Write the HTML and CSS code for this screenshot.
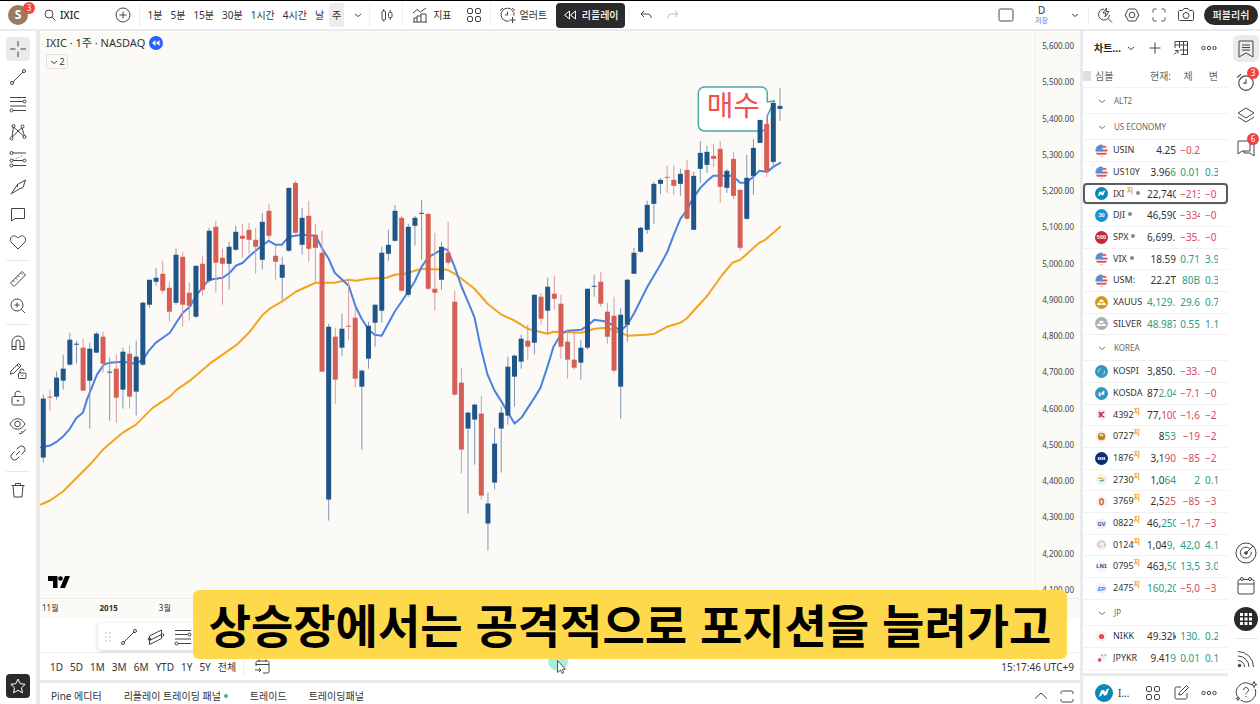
FILE: index.html
```html
<!DOCTYPE html>
<html lang="ko">
<head>
<meta charset="utf-8">
<title>IXIC · 1주 · NASDAQ</title>
<link rel="stylesheet" href="styles.css">
</head>
<body>
<svg class="defs" aria-hidden="true">
  <symbol id="flag" viewBox="0 0 14 14"><clipPath id="fc"><circle cx="7" cy="7" r="6.5"/></clipPath><g clip-path="url(#fc)"><path fill="#fff" d="M0 0h14v14H0z"/><path fill="#e0535a" d="M7 2h7v2H7zM7 6h7v2.200H7zM0 9.500h14v2H0zM2 12.800h10V14H2z"/><path fill="#3b82d8" d="M0 0h8v8H0z"/><path stroke="#b9d6f7" stroke-width=".7" stroke-dasharray="1 1" d="M1 2.500h7M1 4.500h7M1 6.500h7"/></g></symbol>
  <symbol id="nasdaq" viewBox="0 0 14 14"><circle cx="7" cy="7" r="7" fill="#0a87b5"/><path fill="#fff" d="M3 9.900 4.600 5.300l2-.8 1.500 1.800.8-2.100 2.100-.8-1.700 4.900-2 .8-1.500-1.900-.8 1.900z"/></symbol>
  <symbol id="chev" viewBox="0 0 10 10"><path d="M2 4l3 2.500L8 4" fill="none" stroke="currentColor"/></symbol>
  <symbol id="trend" viewBox="0 0 18 18"><path d="M4 14 14 4"/><circle cx="3" cy="15" r="1.500"/><circle cx="15" cy="3" r="1.500"/></symbol>
  <symbol id="fib" viewBox="0 0 18 18"><path d="M1 2.500h16M1 6.500h13M1 11h16M4 15.500h13"/><circle cx="15.500" cy="6.500" r="1.500"/><circle cx="2.500" cy="15.500" r="1.500"/></symbol>
  <symbol id="four" viewBox="0 0 16 16"><rect x="1.500" y="1.500" width="5" height="5" rx="1.500"/><rect x="9.500" y="1.500" width="5" height="5" rx="1.500"/><rect x="1.500" y="9.500" width="5" height="5" rx="1.500"/><rect x="9.500" y="9.500" width="5" height="5" rx="1.500"/></symbol>
  <symbol id="dots" viewBox="0 0 16 16"><circle cx="2.500" cy="8" r="1.700"/><circle cx="8" cy="8" r="1.700"/><circle cx="13.500" cy="8" r="1.700"/></symbol>
  <symbol id="alarm" viewBox="0 0 18 18"><circle cx="9" cy="10" r="6.500"/><path d="M9 6.500V10H6.500M1 5l3.500-3M17 5l-3.500-3"/></symbol>
</svg>

<header class="top">
  <button class="avatar" aria-label="계정">S<span class="badge">3</span></button>
  <button class="symbol"><svg class="ic s12" viewBox="0 0 12 12"><circle cx="5" cy="5" r="4"/><path d="M8 8l3.500 3.500"/></svg>IXIC</button>
  <button class="add" aria-label="비교"><svg class="ic s16" viewBox="0 0 16 16"><circle cx="8" cy="8" r="7"/><path d="M8 4.500v7M4.500 8h7"/></svg></button>
  <nav class="periods">
    <button>1분</button><button>5분</button><button>15분</button><button>30분</button><button>1시간</button><button>4시간</button><button>날</button><button class="on">주</button>
    <button aria-label="더보기"><svg class="ic s10"><use href="#chev"/></svg></button>
  </nav>
  <button class="cell" aria-label="차트 타입"><svg class="ic s14" viewBox="0 0 14 14"><rect x="2" y="3" width="3.500" height="9" rx="1"/><path d="M3.700 1v2M3.700 12v1.500M10.200 2v2.500M10.200 9.500V12"/><rect x="8.500" y="4.500" width="3.500" height="5" rx="1"/></svg></button>
  <div class="cell pair">
    <button><svg class="ic s16" viewBox="0 0 16 16"><path d="M1 6l4-3.500 3.500 2.500L14 1M2 15v-4h3v4M5 11V9h4v6M9 9V7h5v8M1 15h14"/></svg>지표</button>
    <button aria-label="템플릿"><svg class="ic s16"><use href="#four"/></svg></button>
  </div>
  <button class="cell alert"><svg class="ic s18" viewBox="0 0 18 18"><path d="M15 9.500A6.500 6.500 0 1 0 10 15M8.500 5.500V9H6M1 4.500 4 2M16 4.500 13 2M13.500 11v6M10.500 14h6"/></svg>얼러트</button>
  <button class="replay"><svg class="ic s14" viewBox="0 0 14 14"><path d="M6.500 3v8L1.500 7zM12.500 3v8L7.500 7z"/></svg>리플레이</button>
  <div class="undo">
    <button aria-label="되돌리기"><svg class="ic s14" viewBox="0 0 14 14"><path d="M5 3 2 6l3 3M2 6h6.500a3.500 3.500 0 0 1 3.500 4"/></svg></button>
    <button class="dim" aria-label="다시하기"><svg class="ic s14" viewBox="0 0 14 14"><path d="M9 3l3 3-3 3M12 6H5.500A3.500 3.500 0 0 0 2 10"/></svg></button>
  </div>
  <div class="right">
    <button aria-label="레이아웃"><svg class="ic s16" viewBox="0 0 16 16"><rect x="1" y="2" width="14" height="12" rx="1.500"/></svg></button>
    <button class="save">D<small>저장</small></button>
    <button aria-label="레이아웃 메뉴"><svg class="ic s10"><use href="#chev"/></svg></button>
    <div class="acts">
      <button aria-label="빠른 검색"><svg class="ic s16" viewBox="0 0 16 16"><path d="M7 2a5.500 5.500 0 1 0 5.500 6M11 11.500l4 4M9.500 1 6 6h3l-1 4 4-5.500H9z"/></svg></button>
      <button aria-label="설정"><svg class="ic s16" viewBox="0 0 16 16"><path d="M4.500 2h7L15 8l-3.500 6h-7L1 8z"/><circle cx="8" cy="8" r="2.800"/></svg></button>
      <button aria-label="전체화면"><svg class="ic s16" viewBox="0 0 16 16"><path d="M2 5.500v-2A1.500 1.500 0 0 1 3.500 2h2M10.500 2h2A1.500 1.500 0 0 1 14 3.500v2M14 10.500v2a1.500 1.500 0 0 1-1.500 1.500h-2M5.500 14h-2A1.500 1.500 0 0 1 2 12.500v-2"/></svg></button>
      <button aria-label="스냅샷"><svg class="ic s16" viewBox="0 0 16 16"><path d="M1.500 3.500h3l1.500-2h4l1.500 2h3A1 1 0 0 1 15.500 4.500v8a1 1 0 0 1-1 1h-13a1 1 0 0 1-1-1v-8a1 1 0 0 1 1-1z"/><circle cx="8" cy="8.500" r="3"/></svg></button>
    </div>
    <button class="publish">퍼블리쉬</button>
  </div>
</header>

<main class="work">
  <aside class="tools">
    <div class="grp g8">
      <button class="on" aria-label="십자선"><svg class="ic s18" viewBox="0 0 18 18"><path d="M9 1v5.500M9 11.500V17M1 9h5.500M11.500 9H17"/></svg></button>
      <button aria-label="추세선"><svg class="ic s18"><use href="#trend"/></svg></button>
      <button aria-label="피보나치"><svg class="ic s18"><use href="#fib"/></svg></button>
      <button aria-label="패턴"><svg class="ic s18" viewBox="0 0 18 18"><path d="M3 14 4.500 4 9 8l4-3 2.500 8M3.500 14 9 8l5.500 5"/><circle cx="2.500" cy="15.500" r="1.500"/><circle cx="4.500" cy="3" r="1.500"/><circle cx="13.500" cy="3.500" r="1.500"/><circle cx="15.500" cy="14" r="1.500"/></svg></button>
      <button aria-label="예측"><svg class="ic s18" viewBox="0 0 18 18"><path d="M4 3h13M4 10.500h10M4 15.500h13"/><path stroke-dasharray="1 2" d="M4 10 15 5"/><circle cx="2.500" cy="3" r="1.500"/><circle cx="2.500" cy="10.500" r="1.500"/><circle cx="15.500" cy="10.500" r="1.500"/><circle cx="2.500" cy="15.500" r="1.500"/></svg></button>
      <button aria-label="브러쉬"><svg class="ic s18" viewBox="0 0 18 18"><path d="M2 16 8.500 6.500 16.500 2 14 9.500l-4 1.500zM8.500 6.500v2.500"/></svg></button>
      <button aria-label="텍스트"><svg class="ic s18" viewBox="0 0 18 18"><path d="M2.500 3.500h13v10H6L2.500 16z"/></svg></button>
      <button aria-label="아이콘"><svg class="ic s18" viewBox="0 0 18 18"><path d="M9 16 2 9C-.5 5 4.500 0 9 5c4.500-5 9.500 0 7 4z"/></svg></button>
    </div>
    <hr>
    <div class="grp g2">
      <button aria-label="측정"><svg class="ic s18" viewBox="0 0 18 18"><path d="M1.500 13 13 1.500 16.500 5 5 16.500zM4 10.500l1.500 1.500M6.500 8 8 9.500M9 5.500 10.500 7M11.500 3 13 4.500"/></svg></button>
      <button aria-label="줌 인"><svg class="ic s18" viewBox="0 0 18 18"><circle cx="8" cy="8" r="6"/><path d="M12.500 12.500 16 16M8 5.500v5M5.500 8h5"/></svg></button>
    </div>
    <hr>
    <div class="grp g5">
      <button aria-label="자석"><svg class="ic s18" viewBox="0 0 18 18"><path d="M3 15.500V8a6 6 0 0 1 12 0v7.500h-4V8a2 2 0 0 0-4 0v7.500zM3 12.500h4M11 12.500h4"/></svg></button>
      <button aria-label="드로잉 모드"><svg class="ic s18" viewBox="0 0 18 18"><path d="M1.500 12 2 9l7.500-7.500 2.500 2.500L4.500 11.500zM8 3l2.500 2.500"/><rect x="9.500" y="11" width="7.500" height="5.500" rx="1"/><path d="M11 11V9a2 2 0 0 1 4 0M13.200 13v1.500"/></svg></button>
      <button aria-label="잠금"><svg class="ic s18" viewBox="0 0 18 18"><rect x="3" y="7.500" width="12" height="8.500" rx="1.500"/><path d="M6 7.500V5a3 3 0 0 1 5.500-1.500"/><circle cx="9" cy="11.700" r=".7"/></svg></button>
      <button aria-label="감추기"><svg class="ic s18" viewBox="0 0 18 18"><path d="M1 7c4-7 11-7 15 0-4 7-11 7-15 0z"/><circle cx="8.500" cy="7" r="2.800"/><path d="M10 16c1 1 3 1 4-1l3-2.500M12 14.500l2 1"/></svg></button>
      <button aria-label="동기화"><svg class="ic s18" viewBox="0 0 18 18"><path d="M7.500 5.500 10 3a3.500 3.500 0 0 1 5 5l-2.500 2.500M10.500 12.500 8 15a3.500 3.500 0 0 1-5-5l2.500-2.500M7 11l4-4"/></svg></button>
    </div>
    <hr>
    <button aria-label="지우기"><svg class="ic s18" viewBox="0 0 18 18"><path d="M2.500 4.500h13M4 4.500 5 16h8l1-11.500M6.500 4.500v-2h5v2"/></svg></button>
    <button class="star" aria-label="즐겨찾기"><svg class="ic s18" viewBox="0 0 18 18"><path d="M9 2l2.200 4.700 5 .6-3.700 3.500 1 5L9 13.300 4.500 15.800l1-5L1.800 7.300l5-.6z"/></svg></button>
  </aside>

  <section class="center">
    <div class="chart">
      <div class="plot">
        <svg id="candles" viewBox="40 31 996 567" preserveAspectRatio="xMinYMin meet"></svg>
        <div class="legend">
          <h1>IXIC · 1주 · NASDAQ<svg class="s14" viewBox="0 0 14 14"><circle cx="7" cy="7" r="7" fill="#2962ff"/><path fill="#fff" d="M6.500 4v6L3 7zM10.500 4v6L7 7z"/></svg></h1>
          <button><svg class="ic s10"><use href="#chev"/></svg>2</button>
        </div>
        <svg class="tv" viewBox="0 0 22 12"><path d="M0 0h9.500v12H5V5H0z"/><circle cx="12.500" cy="2.500" r="2.300"/><path d="M17 0h5l-5 12h-5z"/></svg>
      </div>
      <ol class="prices">
        <li>5,600.00</li><li>5,500.00</li><li>5,400.00</li><li>5,300.00</li><li>5,200.00</li><li>5,100.00</li><li>5,000.00</li><li>4,900.00</li><li>4,800.00</li><li>4,700.00</li><li>4,600.00</li><li>4,500.00</li><li>4,400.00</li><li>4,300.00</li><li>4,200.00</li><li>4,100.00</li>
      </ol>
    </div>
    <div class="times"><span>11월</span><b>2015</b><span>3월</span></div>
    <div class="drawbar">
      <div class="float">
        <svg class="grip" viewBox="0 0 6 10"><path d="M0 1h1.500M4 1h1.500M0 5h1.500M4 5h1.500M0 9h1.500M4 9h1.500"/></svg>
        <button aria-label="추세선"><svg class="ic s18"><use href="#trend"/></svg></button>
        <button aria-label="채널"><svg class="ic s18" viewBox="0 0 18 18"><path d="M2.500 8 14.500 2v4.500l-12 6zM2.500 16.500l12-6V7M2.500 12.500v4"/><circle cx="2.500" cy="11" r="1.300"/><circle cx="15.500" cy="7" r="1.300"/></svg></button>
        <button aria-label="피보나치"><svg class="ic s18"><use href="#fib"/></svg></button>
      </div>
    </div>
    <div class="ranges">
      <button>1D</button><button>5D</button><button>1M</button><button>3M</button><button>6M</button><button>YTD</button><button>1Y</button><button>5Y</button><button>전체</button>
      <button class="goto" aria-label="날짜로 가기"><svg class="ic s16" viewBox="0 0 16 16"><path d="M2 7V3.500A1.500 1.500 0 0 1 3.500 2h10A1.500 1.500 0 0 1 15 3.500v9a1.500 1.500 0 0 1-1.500 1.500H9M2 5.500h13M5 .5V3M12 .5V3M1 11h6M5 9l2 2-2 2"/></svg></button>
      <time>15:17:46 UTC+9</time>
    </div>
    <div class="tabs">
      <button>Pine 에디터</button><button>리플레이 트레이딩 패널<i></i></button><button>트레이드</button><button>트레이딩패널</button>
      <button class="open" aria-label="열기"><svg class="ic s14" viewBox="0 0 14 14"><path d="M1 9.500 7 4l6 5.500"/></svg></button>
      <button aria-label="최대화"><svg class="ic s14" viewBox="0 0 14 14"><path d="M1 5V3.500A1.500 1.500 0 0 1 2.500 2h9A1.500 1.500 0 0 1 13 3.500V5M1 10v1.500A1.500 1.500 0 0 0 2.500 13h9a1.500 1.500 0 0 0 1.500-1.500V10"/></svg></button>
    </div>
  </section>

  <section class="watch">
    <div class="whead">
      <button class="wname">차트… <svg class="ic s10"><use href="#chev"/></svg></button>
      <button aria-label="추가"><svg class="ic s14" viewBox="0 0 14 14"><path d="M7 1.500v11M1.500 7h11"/></svg></button>
      <button aria-label="테이블 뷰"><svg class="ic s16" viewBox="0 0 16 16"><path d="M2 8V1.500h12.500v13H8M2 5h12.500M6.500 1.500V8M10.500 1.500v13M6.500 10H14.500M1 14.500 5 10.500M2 10.500h3v3"/></svg></button>
      <button aria-label="메뉴"><svg class="ic s16"><use href="#dots"/></svg></button>
    </div>
    <table>
      <colgroup><col class="c1"><col class="c2"><col class="c3"><col class="c4"><col class="c5"><col></colgroup>
      <thead><tr><th colspan="2" class="sy">심볼</th><th>현재:</th><th>체</th><th class="pc">변</th><th></th></tr></thead>
      <tbody><tr class="sec"><th colspan="6"><svg class="ic s10"><use href="#chev"/></svg>ALT2</th></tr></tbody>
      <tbody><tr class="sec"><th colspan="6"><svg class="ic s10"><use href="#chev"/></svg>US ECONOMY</th></tr></tbody>
      <tbody>
        <tr><td><svg class="lg"><use href="#flag"/></svg></td><td>USIN</td><td>4.25</td><td class="dn">−0.2</td><td></td><td></td></tr>
        <tr><td><svg class="lg"><use href="#flag"/></svg></td><td>US10Y</td><td>3.96<em>6</em></td><td class="up">0.01</td><td class="up">0.3</td><td></td></tr>
        <tr class="sel"><td><svg class="lg"><use href="#nasdaq"/></svg></td><td>IXI <sup>지</sup><i></i></td><td class="cut">22,740</td><td class="dn cut">−213</td><td class="dn">−0</td><td></td></tr>
        <tr><td><svg class="lg" viewBox="0 0 14 14"><circle cx="7" cy="7" r="7" fill="#1e93d0"/><text x="7" y="9">30</text></svg></td><td>DJI<i></i></td><td class="cut">46,590</td><td class="dn cut">−334</td><td class="dn">−0</td><td></td></tr>
        <tr><td><svg class="lg" viewBox="0 0 14 14"><circle cx="7" cy="7" r="7" fill="#c42841"/><text x="7" y="9">500</text></svg></td><td>SPX<i></i></td><td class="cut">6,699.</td><td class="dn">−35.</td><td class="dn">−0</td><td></td></tr>
        <tr><td><svg class="lg"><use href="#flag"/></svg></td><td>VIX<i></i></td><td>18.59</td><td class="up">0.71</td><td class="up">3.9</td><td></td></tr>
        <tr><td><svg class="lg"><use href="#flag"/></svg></td><td>USM:</td><td>22.2T</td><td class="up">80B</td><td class="up">0.3</td><td></td></tr>
        <tr><td><svg class="lg" viewBox="0 0 14 14"><circle cx="7" cy="7" r="7" fill="#d39b13"/><path fill="#fff" d="M5.500 4h3l1 2.500h-5zM3 7.200h3.200l.8 2.600H2zM7.800 7.200H11l1 2.600H7z"/></svg></td><td>XAUUS</td><td class="up cut">4,129.</td><td class="up">29.6</td><td class="up">0.7</td><td></td></tr>
        <tr><td><svg class="lg" viewBox="0 0 14 14"><circle cx="7" cy="7" r="7" fill="#adafb5"/><path fill="#fff" d="M5.500 4h3l1 2.500h-5zM3 7.200h3.200l.8 2.600H2zM7.800 7.200H11l1 2.600H7z"/></svg></td><td>SILVER</td><td class="up cut">48.987</td><td class="up">0.55</td><td class="up">1.1</td><td></td></tr>
      </tbody>
      <tbody><tr class="sec"><th colspan="6"><svg class="ic s10"><use href="#chev"/></svg>KOREA</th></tr></tbody>
      <tbody>
        <tr><td><svg class="lg" viewBox="0 0 14 14"><circle cx="7" cy="7" r="7" fill="#3498bd"/><path fill="none" stroke="#bfe6f4" d="M4 8a3 3 0 0 1 2-4M10 6a3 3 0 0 1-2 4"/></svg></td><td>KOSPI</td><td class="cut">3,850.</td><td class="dn">−33.</td><td class="dn">−0</td><td></td></tr>
        <tr><td><svg class="lg" viewBox="0 0 14 14"><circle cx="7" cy="7" r="7" fill="#3498bd"/><path fill="#fff" d="M4 6h2v4H4zM7 6l3-2.500V8L7 9z"/></svg></td><td>KOSDA</td><td class="cut">87<em>2.04</em></td><td class="dn">−7.1</td><td class="dn">−0</td><td></td></tr>
        <tr><td><svg class="lg" viewBox="0 0 14 14"><circle cx="7" cy="7" r="6" fill="#f6eef0"/><path fill="none" stroke="#cf3355" stroke-width="1.500" d="M4 4.500c3 0 3 5 0 5M10 4.500c-4 0-4 5 0 5M4 7h4"/></svg></td><td>4392<sup>지</sup></td><td class="cut">77,<s>100</s></td><td class="dn">−1,6</td><td class="dn">−2</td><td></td></tr>
        <tr><td><svg class="lg" viewBox="0 0 14 14"><circle cx="7" cy="7" r="6" fill="#f4f0e8"/><circle cx="7" cy="7" r="4" fill="#b98434"/><path fill="#f0d9a0" d="M4 6c2-3 5-2 5 0-1 2-3 0-5 0z"/></svg></td><td>0727<sup>지</sup></td><td>8<em>53</em></td><td class="dn">−19</td><td class="dn">−2</td><td></td></tr>
        <tr><td><svg class="lg" viewBox="0 0 14 14"><circle cx="7" cy="7" r="7" fill="#0c2d70"/><path fill="#dfe8f8" d="M3 5.500h8v3H3z"/><path stroke="#0c2d70" stroke-width=".6" d="M5 5.500v3M7 5.500v3M9 5.500v3"/></svg></td><td>1876<sup>지</sup></td><td>3,1<s>90</s></td><td class="dn">−85</td><td class="dn">−2</td><td></td></tr>
        <tr><td><svg class="lg" viewBox="0 0 14 14"><circle cx="7" cy="7" r="6" fill="#f2f4f2"/><path fill="#e0ad3c" d="M3 6c2-2 5-1 7 1z"/><path fill="#51a86c" d="M4 8c3 2 5 1 7-1z"/></svg></td><td>2730<sup>지</sup></td><td>1,0<em>64</em></td><td class="up">2</td><td class="up">0.1</td><td></td></tr>
        <tr><td><svg class="lg" viewBox="0 0 14 14"><circle cx="7" cy="7" r="6" fill="#f7f0ee"/><ellipse cx="7" cy="7.300" rx="2" ry="3" fill="none" stroke="#d7592f" stroke-width="1.400"/></svg></td><td>3769<sup>지</sup></td><td>2,5<s>25</s></td><td class="dn">−85</td><td class="dn">−3</td><td></td></tr>
        <tr><td><svg class="lg" viewBox="0 0 14 14"><circle cx="7" cy="7" r="6" fill="#eef2f7"/><text class="nv" x="7" y="9.500">GV</text></svg></td><td>0822<sup>지</sup></td><td class="cut">46,<em>250</em></td><td class="dn">−1,7</td><td class="dn">−3</td><td></td></tr>
        <tr><td><svg class="lg" viewBox="0 0 14 14"><circle cx="7" cy="7" r="6" fill="#f4efec"/><path fill="none" stroke="#d3a58f" d="M5 10a3.500 3.500 0 1 1 4 0M5 10l2-2"/></svg></td><td>0124<sup>지</sup></td><td class="cut">1,04<em>9,</em></td><td class="up">42,0</td><td class="up">4.1</td><td></td></tr>
        <tr><td><svg class="lg" viewBox="0 0 14 14"><circle cx="7" cy="7" r="6" fill="#f1f3f8"/><text class="nv" x="7" y="9">LN1</text></svg></td><td>0795<sup>지</sup></td><td class="cut">463,<em>50</em></td><td class="up">13,5</td><td class="up">3.0</td><td></td></tr>
        <tr><td><svg class="lg" viewBox="0 0 14 14"><circle cx="7" cy="7" r="6" fill="#eaf3fb"/><text class="bl" x="7" y="9.500">EP</text></svg></td><td>2475<sup>지</sup></td><td class="up cut">160,20</td><td class="dn">−5,0</td><td class="dn">−3</td><td></td></tr>
      </tbody>
      <tbody><tr class="sec"><th colspan="6"><svg class="ic s10"><use href="#chev"/></svg>JP</th></tr></tbody>
      <tbody>
        <tr><td><svg class="lg" viewBox="0 0 14 14"><circle cx="7" cy="7" r="6" fill="#f5f3f4"/><circle cx="7" cy="7" r="2.800" fill="#e84b5c"/></svg></td><td>NIKK</td><td class="cut">49.32k</td><td class="up">130.</td><td class="up">0.2</td><td></td></tr>
        <tr><td><svg class="lg" viewBox="0 0 14 14"><circle cx="9" cy="5" r="4" fill="#f1f2f5"/><circle cx="5" cy="8.500" r="2" fill="#e84b5c"/><path stroke="#555" d="M7 3l1.500 1.500M10.500 2.500 12 4"/></svg></td><td>JPYKR</td><td>9.41<em>9</em></td><td class="up">0.01</td><td class="up">0.1</td><td></td></tr>
      </tbody>
    </table>
    <div class="wfoot">
      <svg class="s18" viewBox="0 0 14 14"><use href="#nasdaq"/></svg><span>I…</span>
      <button aria-label="그리드"><svg class="ic s16"><use href="#four"/></svg></button>
      <button aria-label="노트"><svg class="ic s16" viewBox="0 0 16 16"><path d="M8 2H3.500A1.500 1.500 0 0 0 2 3.500v9A1.500 1.500 0 0 0 3.500 14h9a1.500 1.500 0 0 0 1.500-1.500V8M6 10l.5-2.500 7-7 2 2-7 7z"/></svg></button>
      <button aria-label="더보기"><svg class="ic s16"><use href="#dots"/></svg></button>
    </div>
  </section>

  <aside class="rail">
    <button class="on" aria-label="워치리스트"><svg class="ic s20" viewBox="0 0 20 20"><path d="M3 2h14v16l-7-4-7 4zM6 6h8M6 8.500h8M6 11h8"/></svg></button>
    <button aria-label="얼러트"><svg class="ic s20"><use href="#alarm"/></svg><span class="badge">3</span></button>
    <button aria-label="오브젝트 트리"><svg class="ic s20" viewBox="0 0 20 20"><path d="M10 3l8 5-8 5-8-5zM2 12l8 5 8-5"/></svg></button>
    <button aria-label="채팅"><svg class="ic s20" viewBox="0 0 20 20"><path d="M2 3h12v10H6l-4 3zM14 6h4v12l-4-3H8v-2"/></svg><span class="badge">6</span></button>
    <div class="low">
      <button aria-label="스크리너"><svg class="ic s22" viewBox="0 0 22 22"><circle cx="11" cy="11" r="10"/><path d="M14.500 6.500A5.500 5.500 0 1 0 16.300 10M11 11l7-7"/><circle cx="11" cy="11" r="1.300" fill="currentColor"/></svg></button>
      <button aria-label="캘린더"><svg class="ic s20" viewBox="0 0 20 20"><rect x="2" y="3.500" width="16" height="14.500" rx="2"/><path d="M2 8h16"/><circle cx="6" cy="3" r="1.500" fill="#fff"/><circle cx="14" cy="3" r="1.500" fill="#fff"/></svg></button>
      <button aria-label="프로덕트"><svg class="s24" viewBox="0 0 24 24"><circle cx="12" cy="12" r="12" fill="#2a2a2a"/><path fill="#fff" d="M6 6h3v3H6zM10.500 6h3v3h-3zM15 6h3v3h-3zM6 10.500h3v3H6zM10.500 10.500h3v3h-3zM15 10.500h3v3h-3zM6 15h3v3H6zM10.500 15h3v3h-3zM15 15h3v3h-3z"/></svg></button>
      <hr>
      <button aria-label="피드"><svg class="ic s20" viewBox="0 0 20 20"><path d="M2 2.500A15.500 15.500 0 0 1 17.500 18M2 7a11 11 0 0 1 11 11M2 11.500A6.500 6.500 0 0 1 8.500 18"/><circle cx="3.500" cy="16.500" r="1.300" fill="currentColor"/></svg></button>
      <button aria-label="도움말"><svg class="ic s22" viewBox="0 0 22 22"><path d="M16 3.500A9.500 9.500 0 0 0 2 15M5.500 19A9.500 9.500 0 0 0 20 8"/><path d="M8.500 9a2.500 2.500 0 1 1 3.500 2.300c-.7.400-1 .8-1 2M11 15v1.200"/><path d="M19 .5l.8 2.200 2 .8-2 .8L19 6.500l-.8-2.200-2-.8 2-.8zM3 15.500l.5 1.500 1.500.5-1.500.5L3 19.500 2.500 18 1 17.500 2.500 17z"/></svg></button>
    </div>
  </aside>
</main>

<svg class="pointer" viewBox="0 0 20 24" aria-hidden="true"><circle cx="10" cy="10" r="10" fill="#a9ebdf"/><path d="M9.500 9.500v12l3-2.500 1.500 3.500 1.800-.8-1.500-3.400h3.200z" fill="#fff" stroke="#555"/></svg>
<p class="caption">상승장에서는 공격적으로 포지션을 늘려가고</p>
<script src="chart.js"></script>
</body>
</html>
```
FILE: styles.css
```css
* { box-sizing: border-box; }
body {
  margin: 0; height: 100vh; overflow: hidden; position: relative;
  display: flex; flex-direction: column;
  border-top: 1px solid #000; background: #fff; color: #333;
  font: 10px/14px "Noto Sans", "Noto Sans CJK KR", sans-serif;
}
button {
  appearance: none; border: 0; background: none; padding: 0; margin: 0;
  color: inherit; font: inherit; cursor: pointer;
  display: flex; align-items: center; justify-content: center; white-space: nowrap; flex: none;
}
svg { display: block; flex: none; }
hr { border: 0; border-top: 1px solid #e8e8ea; margin: 0; width: 24px; }
.defs { position: absolute; width: 0; height: 0; }
.ic { fill: none; stroke: currentColor; stroke-width: 1; color: #444; }
.s10 { width: 10px; height: 10px; }
.s12 { width: 12px; height: 12px; }
.s14 { width: 14px; height: 14px; }
.s16 { width: 16px; height: 16px; }
.s18 { width: 18px; height: 18px; }
.s20 { width: 20px; height: 20px; }
.s22 { width: 22px; height: 22px; }
.s24 { width: 24px; height: 24px; }
.badge {
  position: absolute; top: -3px; right: -7px; width: 12px; height: 12px; border-radius: 6px;
  background: #ef4444; color: #fff; font-size: 8px; line-height: 12px; font-weight: 400; text-align: center;
}

.top { display: flex; align-items: center; height: 30px; flex: none; border-bottom: 2px solid #ebebed; padding-left: 8px; }
.avatar { position: relative; width: 20px; height: 20px; border-radius: 10px; background: #9b7b60; color: #fff; font-size: 12px; font-weight: 700; }
.symbol { margin-left: 16px; gap: 4px; font-weight: 500; color: #222; }
.add { margin-left: 35px; }
.periods { display: flex; align-items: center; gap: 8px; margin-left: 8px; padding-left: 8px; border-left: 1px solid #eee; height: 24px; }
.periods .on { background: #ececee; border-radius: 3px; height: 24px; width: 15px; margin: 0 -3px; }
.periods .on + button { margin-left: 4px; }
.cell { height: 24px; margin-left: 6px; padding-left: 10px; border-left: 1px solid #eee; gap: 5px; }
.periods + .cell { margin-left: 6px; }
.pair { display: flex; gap: 14px; margin-left: 8px; padding-left: 9px; }
.pair button { gap: 5px; }
.alert { margin-left: 8px; padding-left: 8px; gap: 3px; }
.replay { margin-left: 9px; height: 25px; width: 69px; gap: 5px; border-radius: 4px; background: #2a2a2a; color: #fff; font-weight: 500; }
.replay .ic { color: #fff; }
.undo { display: flex; gap: 13px; margin-left: 4px; padding-left: 9px; border-left: 1px solid #eee; }
.dim .ic { color: #b8b8b8; }
.right { margin-left: auto; display: flex; align-items: center; padding-right: 2px; }
.save { flex-direction: column; font-size: 10px; line-height: 11px; margin: 0 22px 0 21px; }
.save small { font-size: 7px; line-height: 9px; color: #4f78e8; }
.acts { display: flex; gap: 11px; margin: 0 10px 0 8px; padding-left: 8px; border-left: 1px solid #eee; }
.publish { width: 54px; height: 20px; border-radius: 10px; background: #2a2a2a; color: #fff; font-weight: 500; }

.work { flex: 1; min-height: 0; display: flex; background: #ebebed; }
.tools { width: 36px; background: #fff; padding: 6px 0; display: flex; flex-direction: column; align-items: center; gap: 6px; flex: none; }
.tools button { width: 24px; height: 24px; border-radius: 4px; }
.tools .on { background: #ebebed; }
.grp { display: flex; flex-direction: column; justify-content: space-between; }
.g8 { height: 217px; }
.g2 { height: 51px; }
.g5 { height: 134px; }
.tools .star { margin-top: auto; background: #2a2a2a; }
.star .ic { color: #fff; }

.center { flex: 1; min-width: 0; margin-left: 4px; display: flex; flex-direction: column; background: #fff; }
.chart { flex: 1; min-height: 0; display: flex; background: #fbfaf6; }
.plot { flex: 1; min-width: 0; display: grid; grid-template: minmax(0, 1fr) / minmax(0, 1fr); border-right: 1px solid #eeede9; }
.plot > * { grid-area: 1 / 1; }
#candles { width: 100%; height: 100%; }
.wu { stroke: #8494b4; }
.wd { stroke: #dc9a9d; }
.bu { fill: #1f5689; }
.bd { fill: #d65f55; }
.ma { fill: none; stroke-width: 2; stroke-linejoin: round; stroke-linecap: round; }
.fast { stroke: #4a80e4; }
.slow { stroke: #f7a21e; }
.bubble { fill: #fff; stroke: #4aa9ab; stroke-width: 1.5; }
.buy { font-size: 29px; font-family: "Noto Sans CJK KR", sans-serif; fill: #ee5250; text-anchor: middle; font-weight: 400; }
.legend { align-self: start; justify-self: start; padding: 4px 6px; }
.legend h1 { display: flex; align-items: center; gap: 4px; margin: 0 0 3px; font-size: 11px; line-height: 16px; font-weight: 400; }
.legend button { width: 22px; height: 15px; border: 1px solid #e3e2de; border-radius: 2px; font-size: 9px; }
.tv { align-self: end; width: 22px; height: 12px; margin: 0 0 10px 8px; fill: #000; }
.prices { list-style: none; margin: 0; width: 44px; padding: 9px 6px 2px 0; display: flex; flex-direction: column; justify-content: space-between; text-align: right; font-size: 8px; line-height: 12px; color: #444; }
.times { display: flex; gap: 41px; padding-left: 2px; height: 20px; line-height: 17px; border-top: 1px solid #eeede9; background: #fbfaf6; font-size: 8px; flex: none; }
.drawbar { height: 35px; padding: 5px 0 0 58px; border-bottom: 1px solid #eee; flex: none; }
.float { display: flex; align-items: center; gap: 9px; width: 200px; height: 27px; padding-left: 7px; border-radius: 4px; box-shadow: 0 1px 4px #0003; }
.grip { width: 6px; height: 10px; stroke: #aaa; fill: none; }
.ranges, .tabs { display: flex; align-items: center; flex: none; }
.ranges { height: 27px; gap: 7px; padding: 0 6px 0 10px; }
.goto { border-left: 1px solid #eee; padding-left: 10px; }
.ranges time { margin-left: auto; }
.tabs { height: 24px; border-top: 3px solid #ebebed; padding: 4px 6px 0 11px; gap: 22px; }
.tabs i { width: 4px; height: 4px; border-radius: 2px; background: #5aa977; margin-left: 3px; }
.tabs .open { margin: 0 -10px 0 auto; }

.watch { width: 145px; margin-left: 3px; background: #fff; display: flex; flex-direction: column; flex: none; }
.whead { display: flex; align-items: center; height: 34px; padding: 0 11px; justify-content: space-between; flex: none; }
.wname { font-weight: 700; gap: 5px; color: #222; }
table { border-collapse: collapse; table-layout: fixed; width: 100%; }
.c1 { width: 30px; } .c2 { width: 32px; } .c3 { width: 31px; } .c4 { width: 24px; } .c5 { width: 18px; }
th { font-weight: 400; text-align: center; padding: 0; color: #666; }
thead th { height: 22px; overflow: hidden; white-space: nowrap; }
thead .sy { text-align: left; padding-left: 12px; background: linear-gradient(#dededf, #dededf) 0 6px / 8px 10px no-repeat; }
thead .pc { text-align: right; }
tr { border-bottom: 1px solid #f1f1f3; }
td { height: 22px; padding: 0; line-height: 14px; text-align: right; white-space: nowrap; overflow: hidden; }
tr:nth-child(3n) td { height: 21px; }
td:nth-child(2) { text-align: left; font-size: 9px; }
td:nth-child(5) { text-align: left; padding-left: 5px; }
td.cut { text-align: left; padding-left: 2px; }
td.cut:nth-child(4) { padding-left: 4px; }
.lg { width: 13px; height: 13px; margin-left: 12px; }
.lg text { font: 700 6px "Liberation Sans", sans-serif; fill: #fff; text-anchor: middle; }
.lg .nv { fill: #27457f; }
.lg .bl { fill: #2c7fd0; font-style: italic; }
.up, td em { color: #2a9d82; font-style: normal; }
.dn, td s { color: #d9485f; text-decoration: none; }
td sup { font-size: 7px; line-height: 7px; font-weight: 700; color: #f0a020; vertical-align: 4px; }
td i { display: inline-block; width: 4px; height: 4px; border-radius: 2px; background: #8a8a8a; margin: 0 0 2px 3px; }
.sec th { height: 26px; text-align: left; font-size: 8px; padding-top: 2px; }
.sec svg { display: inline-block; vertical-align: -2px; margin: 0 7px 0 14px; color: #777; }
.sel { position: relative; }
.sel::after { content: ""; position: absolute; inset: 0 0 -1px; border: 2px solid #5c5c5c; border-radius: 4px; }
.wfoot { margin-top: auto; height: 31px; border-top: 3px solid #ebebed; display: flex; align-items: center; padding: 6px 11px 0 12px; gap: 12px; flex: none; }
.wfoot span { margin: 0 4px 0 -7px; }

.rail { width: 28px; margin-left: 4px; background: #fff; display: flex; flex-direction: column; align-items: center; padding-top: 1px; box-shadow: -4px 0 #fff; flex: none; }
.rail button { position: relative; width: 26px; height: 33px; }
.rail .on { background: #ebebed; background-clip: content-box; padding: 3px 0; border-radius: 7px; }
.rail .badge { top: 2px; right: 0; }
.low { margin: auto 0 -4px; }
.low hr { margin: 3px 1px; }

.pointer { position: absolute; left: 548px; top: 650px; width: 20px; height: 24px; }
.caption {
  position: absolute; left: 193px; right: 193px; bottom: 45px; margin: 0; height: 69px;
  border-radius: 6px; background: #ffd94c; color: #000; text-align: center; white-space: nowrap;
  font: 700 46px/67px "Noto Sans CJK KR", sans-serif;
}
```
FILE: chart.js
```js
// Each candle: high, top of body, bottom of body, low, direction (1 up, 0 down)
const candles = [
[395,399,458,463,1],[390,397,398,411,0],[372,378,397,400,1],[355,369,381,390,1],[333,340,365,366,1],[341,344,345,364,1],
[339,348,391,391,0],[343,349,381,429,1],[332,334,353,353,1],[332,337,364,373,0],[358,372,373,421,1],[355,369,398,423,0],
[348,352,390,409,1],[346,354,397,409,0],[341,357,392,416,1],[302,303,365,366,1],[280,280,305,308,1],[268,278,282,286,1],
[261,274,291,294,0],[282,288,312,322,0],[249,255,303,305,1],[252,257,305,327,0],[283,293,306,321,0],[266,266,317,318,1],
[256,264,290,296,0],[228,231,281,283,1],[221,227,263,293,0],[249,258,264,305,0],[242,247,264,290,1],[226,232,250,251,1],
[224,236,239,258,0],[223,230,240,254,0],[228,240,247,274,0],[213,222,260,270,1],[204,211,236,240,0],[246,256,262,280,0],
[257,265,278,300,1],[188,188,251,252,1],[181,183,233,234,0],[208,218,245,255,1],[201,216,249,262,0],[224,235,248,284,0],
[231,253,372,372,0],[324,327,500,521,1],[328,337,380,404,0],[314,329,348,356,1],[279,326,327,340,0],[307,318,379,388,0],
[370,371,387,450,1],[322,326,359,369,1],[305,305,323,347,1],[247,253,311,323,1],[230,245,254,261,1],[205,211,241,242,1],
[216,218,291,292,0],[224,227,295,297,1],[216,218,226,246,1],[200,213,214,260,1],[214,214,289,290,0],[233,289,293,311,0],
[242,247,280,290,1],[222,253,263,265,0],[291,302,395,396,0],[368,383,450,474,0],[412,413,429,514,1],[404,405,420,465,1],
[396,414,496,500,0],[493,504,524,551,1],[428,444,483,490,1],[407,413,429,473,1],[357,367,416,425,1],[355,356,377,407,1],
[335,339,362,369,1],[325,341,347,360,0],[295,295,343,355,1],[293,297,319,325,0],[278,287,311,334,1],[276,294,299,310,0],
[295,304,347,359,0],[330,342,360,379,0],[332,360,368,370,0],[340,348,363,380,1],[289,289,348,350,1],[275,286,287,297,1],
[272,282,304,307,0],[303,312,337,344,0],[297,316,371,373,0],[308,315,387,419,1],[279,280,325,342,1],[248,253,274,274,1],
[227,228,252,253,1],[201,205,230,234,1],[182,184,204,224,1],[178,180,184,194,1],[166,177,178,193,0],[165,180,186,195,0],
[169,174,184,196,1],[160,170,219,220,0],[172,176,230,230,1],[141,153,169,183,1],[146,152,165,173,1],[144,156,159,167,0],
[141,149,187,203,0],[169,171,188,193,1],[152,159,196,199,0],[190,190,248,251,0],[155,178,219,220,1],[139,148,176,195,1],
[120,120,143,143,1],[117,124,172,177,0],[102,103,162,167,1],[88,106,109,121,1]
];
const fast = "41,448 50,446 57,442 63,437 70,429 76,419 83,413 87,400 97,375 104,365 110,363 123,362 136,364 143,360 149,351 156,343 163,338 170,333 177,322 183,313 190,307 197,295 209,280 223,278 230,273 236,266 243,263 250,256 257,250 269,241 276,245 282,245 289,237 302,235 316,236 322,248 329,259 335,273 349,286 356,307 362,319 369,330 375,335 382,336 395,312 408,293 415,282 422,267 429,257 435,254 443,249 448,250 455,267 462,287 468,301 475,318 481,347 488,375 495,391 502,402 515,424 522,418 535,398 541,388 548,367 554,347 562,334 568,331 582,330 588,326 595,320 608,322 621,331 628,325 635,313 648,287 661,265 668,252 674,236 681,219 687,211 694,198 701,188 708,181 714,176 733,176 741,183 747,183 754,177 760,171 768,172 774,167 781,163";
const slow = "41,505 50,501 63,492 77,478 90,465 103,450 123,433 136,425 153,408 170,397 177,390 190,381 210,364 237,345 250,332 263,315 270,309 282,302 296,292 307,287 316,283 335,283 349,280 356,281 368,279 387,278 395,275 405,274 422,269 448,270 455,274 462,279 475,289 488,304 502,315 515,321 528,329 548,334 554,332 582,333 595,329 607,328 621,333 628,336 647,335 655,334 668,327 681,323 687,319 708,296 723,275 733,263 741,260 760,243 766,240 781,227";

const step = (780.7 - 43.3) / (candles.length - 1);
let out = '<path class="bubble" d="M705 87h57a6 6 0 0 1 6 6v9l7-1-7 15v9a6 6 0 0 1-6 6h-57a6 6 0 0 1-6-6V93a6 6 0 0 1 6-6z"/>'
  + '<text class="buy" x="734" y="116">매수</text>'
  + '<polyline class="ma slow" points="' + slow + '"/><polyline class="ma fast" points="' + fast + '"/>';
candles.forEach(([h, t, b, l, up], i) => {
  const x = 43.3 + step * i;
  const d = up ? "u" : "d";
  out += `<path class="w${d}" d="M${x} ${h}V${l}"/><rect class="b${d}" x="${x - 2.5}" y="${t}" width="5" height="${Math.max(b - t, 1)}"/>`;
});
document.getElementById("candles").innerHTML = out;
```
